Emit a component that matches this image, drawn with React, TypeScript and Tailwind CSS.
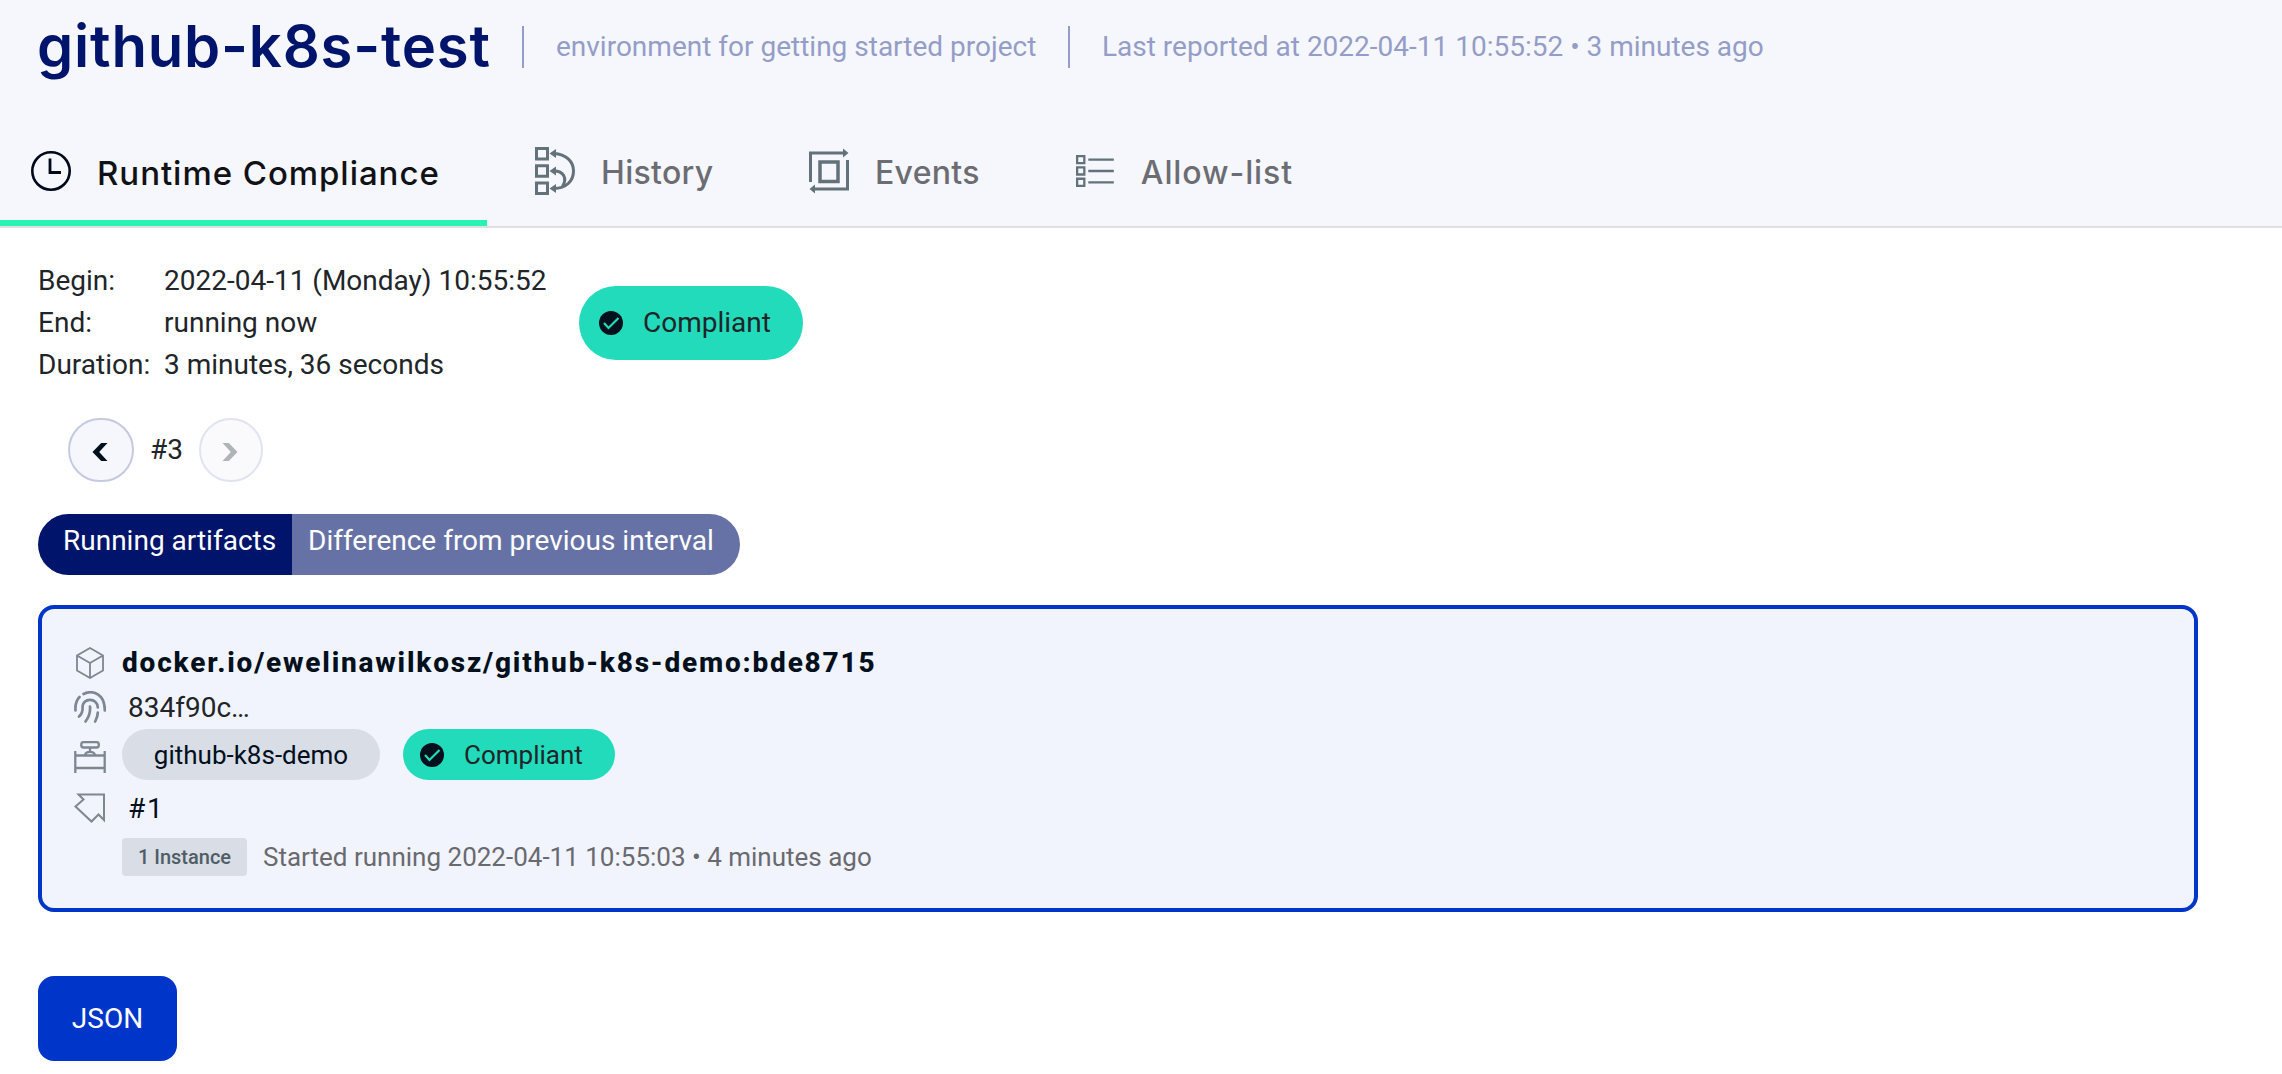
import React from 'react';

function T({ children, className = '' }: { children: React.ReactNode; className?: string }) {
  return <span className={`whitespace-nowrap ${className}`}>{children}</span>;
}

function ClockIcon() {
  return (
    <svg width="40" height="40" viewBox="0 0 40 40" fill="none" stroke="#00091b">
      <circle cx="20" cy="20" r="18.7" strokeWidth="2.6" />
      <path d="M19 7.5V21.5H30" strokeWidth="2.8" />
    </svg>
  );
}

function HistoryIcon() {
  return (
    <svg width="40" height="48" viewBox="0 0 40 48" fill="none" stroke="#63717b" strokeWidth="3">
      <path d="M1.5 1.5h11v10.5h-11zM1.5 18.7h11v10.6h-11zM1.5 36h11v10.5h-11z" />
      <path d="M19 6.5C31 7 38.5 14.5 38.5 24C38.5 34 31 41.5 19 41.5M19 24C28.5 24 32.5 31 27.5 39.5" />
      <path d="M14.5 6.5L21 2v9zM14.5 24L21 19.5v9zM14.5 41.5L21 37v9z" fill="#63717b" stroke="none" />
    </svg>
  );
}

function EventsIcon() {
  return (
    <svg width="40" height="46" viewBox="0 0 40 46" fill="none" stroke="#63717b" strokeWidth="3">
      <path d="M1.5 34V5H34M38.5 12V41H6" />
      <path d="M11 14h18v19.5h-18z" strokeWidth="3.5" />
      <path d="M34 0.5L39.5 5L34 9.5zM6 36.5L0.5 41L6 45.5z" fill="#63717b" stroke="none" />
    </svg>
  );
}

function ListIcon() {
  return (
    <svg width="40" height="34" viewBox="0 0 40 34" fill="none" stroke="#63717b" strokeWidth="2.4">
      <path d="M1.2 1.2h7.6v7.5h-7.6zM1.2 13.2h7.6v7.5h-7.6zM1.2 25.2h7.6v7.5h-7.6z" />
      <path d="M13 5H40M13 17H40M13 29H40" />
    </svg>
  );
}

function CheckIcon() {
  return (
    <svg width="24" height="24" viewBox="0 0 24 24" className="shrink-0">
      <circle cx="12" cy="12" r="12" fill="#00101c" />
      <path d="M5 12l4.5 5L19.5 7" fill="none" stroke="#22dbba" strokeWidth="2.2" />
    </svg>
  );
}

function Chevron({ right = false }: { right?: boolean }) {
  return (
    <svg width="16" height="18" viewBox="0 0 16 18" className={right ? 'mr-0.5 mt-1 rotate-180 opacity-60' : 'mr-0.5 mt-1'}>
      <path d="M9.2 0H15.5L7.2 9L15.5 18H9.2L0.5 9z" fill="#00101c" />
    </svg>
  );
}

function CubeIcon() {
  return (
    <svg width="32" height="32" viewBox="0 0 32 32" fill="none" stroke="#7d8790" strokeWidth="1.8">
      <path d="M16 1L29 8.5V23.5L16 31L3 23.5V8.5zM3 8.5L16 16L29 8.5M16 16V31" />
    </svg>
  );
}

function FingerprintIcon() {
  return (
    <svg width="32" height="32" viewBox="0 0 32 32" fill="none" stroke="#7d8790" strokeWidth="2.7" strokeLinecap="round">
      <path d="M1.5 19.5C1 13 2 9.5 5.5 6M9.5 3C19-1.5 31 3 30.8 19.5" />
      <path d="M5 25.5C8.5 22.5 8.8 20 8.6 16.5C8.2 6.5 23.5 6 23.8 16.5" />
      <path d="M16 15.5C16.5 21 15 26 11.5 30.5M23.8 21.5C23.8 25 22.5 28 21.2 30.5" />
    </svg>
  );
}

function EnvironmentIcon() {
  return (
    <svg width="32" height="32" viewBox="0 0 32 32" fill="none" stroke="#7d8790" strokeWidth="2.3">
      <path d="M1.3 10V32M30.7 10V32M1 14.5H31M1 27H31M16 6.5V11M11 14C12 9.8 20 9.8 21 14" />
      <rect x="7.3" y="1.2" width="17.5" height="5.3" rx="2.2" />
    </svg>
  );
}

function TagIcon() {
  return (
    <svg width="32" height="32" viewBox="0 0 32 32" fill="none" stroke="#7d8790" strokeWidth="2">
      <path d="M4.5 1.5H30V27L24.5 21.5L17.5 28.5L1.5 13.5L9.5 6.5z" />
    </svg>
  );
}

const tabs = [
  { label: 'History', icon: <HistoryIcon />, box: 'w-[274px]', text: 'tracking-[0.3px]' },
  { label: 'Events', icon: <EventsIcon />, box: 'w-[267px]', text: 'tracking-[0.3px]' },
  { label: 'Allow-list', icon: <ListIcon />, box: 'w-[217px]', text: 'pl-px tracking-[0.9px]' },
];

export default function App() {
  return (
    <div className="h-[1074px] w-[2282px] overflow-hidden bg-white font-['Roboto',sans-serif] text-[28px] leading-[42px] text-[#212529]">
      <header className="h-[228px] border-b-2 border-[#dfdfe1] bg-[#f6f7fd]">
        <div className="flex h-[94px] items-center pl-[37px] text-[#949dc7]">
          <h1 className="w-[485px] pb-[2px] font-['Inter',sans-serif] text-[58px] font-semibold leading-[80px] text-[#00146b]">
            <T className="tracking-[0.8px]">github-k8s-test</T>
          </h1>
          <div className="h-[42px] w-[2px] bg-[#949dc7]" />
          <p className="w-[544px] pl-8"><T>environment for getting started project</T></p>
          <div className="h-[42px] w-[2px] bg-[#949dc7]" />
          <p className="pl-8"><T>Last reported at 2022-04-11 10:55:52 • 3 minutes ago</T></p>
        </div>
        <nav className="flex h-[132px] pt-[24px] font-['Inter',sans-serif] text-[32px] font-medium text-[#6c6d72]">
          <div className="flex h-[108px] w-[487px] items-center gap-[26px] border-b-[6px] border-[#26f3b4] pl-[31px] pt-[4px] text-[#111216]">
            <ClockIcon />
            <T className="pt-[4px] text-[33px] tracking-[0.95px]">Runtime Compliance</T>
          </div>
          <div className="flex h-[102px] pl-[48px] pt-[4px]">
            {tabs.map((t) => (
              <div key={t.label} className={`flex items-center gap-[26px] ${t.box}`}>
                {t.icon}
                <T className={`pt-[4px] ${t.text}`}>{t.label}</T>
              </div>
            ))}
          </div>
        </nav>
      </header>

      <main className="pl-[38px] pt-[32px]">
        <section className="flex items-center">
          <dl className="grid w-[541px] grid-cols-[126px_1fr] whitespace-nowrap">
            <dt>Begin:</dt><dd>2022-04-11 (Monday) 10:55:52</dd>
            <dt>End:</dt><dd>running now</dd>
            <dt>Duration:</dt><dd>3 minutes, 36 seconds</dd>
          </dl>
          <div className="flex h-[74px] w-[224px] items-center gap-5 rounded-full bg-[#22dbba] pl-5">
            <CheckIcon />
            <T>Compliant</T>
          </div>
        </section>

        <section className="mt-[32px] flex h-[64px] items-center pl-[30px]">
          <button className="flex h-[64px] w-[66px] items-center justify-center rounded-full border-2 border-[#c5c9e2] bg-[#f6f7fd]"><Chevron /></button>
          <span className="w-[65px] pl-[16px]">#3</span>
          <button className="flex h-[64px] w-[64px] items-center justify-center rounded-full border-2 border-[#c5c9e2] bg-[#f6f7fd] opacity-50"><Chevron right /></button>
        </section>

        <section className="mt-[32px] flex h-[61px] w-[702px] overflow-hidden rounded-full text-white">
          <div className="w-[254px] bg-[#00146b] pl-[25px] pt-[6px]"><T>Running artifacts</T></div>
          <div className="flex-1 bg-[#6672a6] pl-4 pt-[6px]"><T>Difference from previous interval</T></div>
        </section>

        <section className="mt-[30px] h-[307px] w-[2160px] rounded-2xl border-4 border-[#0035c9] bg-[#f2f4fd] pl-8 pt-[32px] text-[#00101c]">
          <div className="flex h-[44px] items-center gap-4">
            <CubeIcon />
            <T className="font-extrabold tracking-[1.8px]">docker.io/ewelinawilkosz/github-k8s-demo:bde8715</T>
          </div>
          <div className="flex h-[44px] items-center gap-[22px] text-[#212529]">
            <FingerprintIcon />
            <T className="pt-px">834f90c…</T>
          </div>
          <div className="flex h-[51px] items-center text-[26px]">
            <div className="mr-4 pt-[5px]"><EnvironmentIcon /></div>
            <div className="flex h-[51px] w-[258px] items-center justify-center rounded-full bg-[#d9dde5]"><T>github-k8s-demo</T></div>
            <div className="ml-[23px] flex h-[51px] w-[212px] items-center gap-5 rounded-full bg-[#22dbba] pl-[17px] text-[#212529]">
              <CheckIcon />
              <T>Compliant</T>
            </div>
          </div>
          <div className="flex h-[58px] items-center gap-[22px]">
            <TagIcon />
            <span className="tracking-[1.8px]">#1</span>
          </div>
          <div className="flex h-[38px] items-center pl-[48px]">
            <span className="flex h-[38px] w-[125px] items-center justify-center rounded bg-[#d9dde5] text-[20px] font-medium text-[#4f5d67]"><T>1 Instance</T></span>
            <span className="pl-4 text-[26px] text-[#696a6f]"><T>Started running 2022-04-11 10:55:03 • 4 minutes ago</T></span>
          </div>
        </section>

        <button className="mt-[64px] h-[85px] w-[139px] rounded-2xl bg-[#0035c9] text-white">JSON</button>
      </main>
    </div>
  );
}
